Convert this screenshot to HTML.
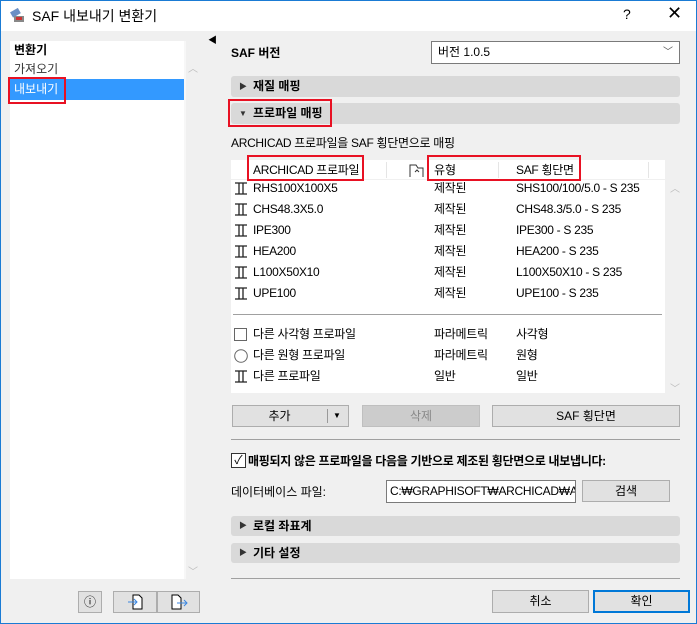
<!DOCTYPE html><html><head><meta charset="utf-8"><style>
*{box-sizing:border-box;margin:0;padding:0;white-space:nowrap}
body{width:697px;height:624px;overflow:hidden;background:#f0f0f0;font-family:"Liberation Sans","Noto Sans CJK KR",sans-serif;font-size:12px;color:#000;position:relative}
.a{position:absolute}
.win{left:0;top:0;width:697px;height:624px;border:1px solid #1a7bd4}
.title{left:1px;top:1px;width:695px;height:30px;background:#fff}
.bar{background:#d9d9d9;border-radius:3px;height:21px;font-weight:bold;padding-left:22px;line-height:21px;font-size:12px}
.bar .tri{position:absolute;left:8px;top:0;font-size:8px;color:#333}
.red{border:2px solid #e81123}
.btn{background:#e1e1e1;border:1px solid #adadad;text-align:center;line-height:20px;height:22px}
.row{height:21px;line-height:21px;width:434px;left:0}
.ic{position:absolute;left:3px;top:4px}
.t{letter-spacing:-0.3px}
</style></head><body>
<div class="a win"></div>
<div class="a title"></div>
<svg class="a" style="left:9px;top:8px" width="18" height="16"><rect x="2" y="2" width="9" height="6" fill="#6b8fc4" transform="rotate(-30 6 5)"/><rect x="5" y="8" width="10" height="6" fill="#888"/><rect x="7" y="9" width="6" height="3" fill="#c33"/></svg>
<div class="a" style="left:32px;top:6px;font-size:14px">SAF 내보내기 변환기</div>
<div class="a" style="left:623px;top:6px;font-size:14px">?</div>
<div class="a" style="left:667px;top:3px;font-size:18px">✕</div>
<div class="a" style="left:10px;top:41px;width:174px;height:538px;background:#fff"></div>
<div class="a" style="left:184px;top:41px;width:2px;height:538px;background:#f7f7f7"></div>
<div class="a" style="left:14px;top:41px;font-weight:bold;line-height:18px">변환기</div>
<div class="a" style="left:14px;top:60px;line-height:18px;color:#333">가져오기</div>
<div class="a" style="left:10px;top:79px;width:174px;height:21px;background:#3399ff;color:#fff;padding-left:4px;line-height:21px">내보내기</div>
<div class="a red" style="left:8px;top:77px;width:58px;height:27px"></div>
<div class="a" style="left:188px;top:60px;color:#bbb;font-size:10px">︿</div>
<div class="a" style="left:188px;top:563px;color:#bbb;font-size:10px">﹀</div>
<div class="a" style="left:208px;top:33px;font-size:9px">◀</div>
<div class="a btn" style="left:78px;top:591px;width:24px;height:22px">ⓘ</div>
<div class="a btn" style="left:113px;top:591px;width:44px;height:22px"><svg width="20" height="20"><path d="M8 3h6l3 3v11H8z" fill="#fff" stroke="#000"/><path d="M3 10h9M9 7l3 3-3 3" stroke="#3a86e0" fill="none"/></svg></div>
<div class="a btn" style="left:157px;top:591px;width:43px;height:22px"><svg width="22" height="20"><path d="M4 3h6l3 3v11H4z" fill="#fff" stroke="#000"/><path d="M9 11h10M16 8l3 3-3 3" stroke="#3a86e0" fill="none"/></svg></div>
<div class="a" style="left:231px;top:44px;font-weight:bold">SAF 버전</div>
<div class="a" style="left:431px;top:41px;width:249px;height:23px;background:#fff;border:1px solid #7a7a7a;padding-left:6px;line-height:21px">버전 1.0.5<span class="a" style="right:6px;top:0;color:#555;font-size:10px">﹀</span></div>
<div class="a bar" style="left:231px;top:76px;width:449px"><span class="tri">▶</span>재질 매핑</div>
<div class="a bar" style="left:231px;top:103px;width:449px"><span class="tri">▼</span>프로파일 매핑</div>
<div class="a red" style="left:228px;top:99px;width:104px;height:28px"></div>
<div class="a t" style="left:231px;top:134px">ARCHICAD 프로파일을 SAF 횡단면으로 매핑</div>
<div class="a" style="left:231px;top:160px;width:434px;height:233px;background:#fff"></div>
<div class="a" style="left:231px;top:160px;width:434px;height:20px;border-bottom:1px solid #f0f0f0"></div>
<div class="a t" style="left:253px;top:160px;line-height:20px">ARCHICAD 프로파일</div>
<div class="a" style="left:386px;top:162px;width:1px;height:16px;background:#e5e5e5"></div>
<div class="a" style="left:498px;top:162px;width:1px;height:16px;background:#e5e5e5"></div>
<div class="a" style="left:648px;top:162px;width:1px;height:16px;background:#e5e5e5"></div>
<svg class="a" style="left:409px;top:162px" width="16" height="16"><path d="M1 15V3h6l2 3h5v9" fill="none" stroke="#333"/><path d="M6 10l2-2 2 2" fill="none" stroke="#333"/></svg>
<div class="a" style="left:434px;top:160px;line-height:20px">유형</div>
<div class="a t" style="left:516px;top:160px;line-height:20px">SAF 횡단면</div>
<div class="a red" style="left:247px;top:155px;width:117px;height:26px"></div>
<div class="a red" style="left:427px;top:155px;width:154px;height:26px"></div>
<div class="a" style="left:670px;top:180px;color:#bbb;font-size:10px">︿</div>
<div class="a" style="left:670px;top:380px;color:#bbb;font-size:10px">﹀</div>
<div class="a t" style="left:231px;top:178px;width:434px">
<div class="row a" style="top:0"><svg class="ic" width="14" height="13"><path d="M1 1h12M1 12h12M5 1v11M9 1v11" stroke="#222" fill="none" stroke-width="1.3"/></svg><span class="a" style="left:22px">RHS100X100X5</span><span class="a" style="left:203px">제작된</span><span class="a" style="left:285px">SHS100/100/5.0 - S 235</span></div>
<div class="row a" style="top:21px"><svg class="ic" width="14" height="13"><path d="M1 1h12M1 12h12M5 1v11M9 1v11" stroke="#222" fill="none" stroke-width="1.3"/></svg><span class="a" style="left:22px">CHS48.3X5.0</span><span class="a" style="left:203px">제작된</span><span class="a" style="left:285px">CHS48.3/5.0 - S 235</span></div>
<div class="row a" style="top:42px"><svg class="ic" width="14" height="13"><path d="M1 1h12M1 12h12M5 1v11M9 1v11" stroke="#222" fill="none" stroke-width="1.3"/></svg><span class="a" style="left:22px">IPE300</span><span class="a" style="left:203px">제작된</span><span class="a" style="left:285px">IPE300 - S 235</span></div>
<div class="row a" style="top:63px"><svg class="ic" width="14" height="13"><path d="M1 1h12M1 12h12M5 1v11M9 1v11" stroke="#222" fill="none" stroke-width="1.3"/></svg><span class="a" style="left:22px">HEA200</span><span class="a" style="left:203px">제작된</span><span class="a" style="left:285px">HEA200 - S 235</span></div>
<div class="row a" style="top:84px"><svg class="ic" width="14" height="13"><path d="M1 1h12M1 12h12M5 1v11M9 1v11" stroke="#222" fill="none" stroke-width="1.3"/></svg><span class="a" style="left:22px">L100X50X10</span><span class="a" style="left:203px">제작된</span><span class="a" style="left:285px">L100X50X10 - S 235</span></div>
<div class="row a" style="top:105px"><svg class="ic" width="14" height="13"><path d="M1 1h12M1 12h12M5 1v11M9 1v11" stroke="#222" fill="none" stroke-width="1.3"/></svg><span class="a" style="left:22px">UPE100</span><span class="a" style="left:203px">제작된</span><span class="a" style="left:285px">UPE100 - S 235</span></div>
<div class="a" style="left:2px;top:136px;width:429px;height:1px;background:#a0a0a0"></div>
<div class="row a" style="top:146px"><svg class="ic" width="14" height="14"><rect x=".5" y=".5" width="12" height="12" fill="none" stroke="#666"/></svg><span class="a" style="left:22px">다른 사각형 프로파일</span><span class="a" style="left:203px">파라메트릭</span><span class="a" style="left:285px">사각형</span></div>
<div class="row a" style="top:167px"><svg class="ic" width="14" height="14"><circle cx="7" cy="7" r="6.3" fill="none" stroke="#666"/></svg><span class="a" style="left:22px">다른 원형 프로파일</span><span class="a" style="left:203px">파라메트릭</span><span class="a" style="left:285px">원형</span></div>
<div class="row a" style="top:188px"><svg class="ic" width="14" height="13"><path d="M1 1h12M1 12h12M5 1v11M9 1v11" stroke="#222" fill="none" stroke-width="1.3"/></svg><span class="a" style="left:22px">다른 프로파일</span><span class="a" style="left:203px">일반</span><span class="a" style="left:285px">일반</span></div>
</div>
<div class="a btn" style="left:232px;top:405px;width:117px;height:22px;padding-right:22px">추가<span class="a" style="left:94px;top:3px;width:1px;height:14px;background:#999"></span><span class="a" style="left:100px;top:0;font-size:8px">▼</span></div>
<div class="a btn" style="left:362px;top:405px;width:118px;height:22px;background:#ccc;border-color:#bfbfbf;color:#888">삭제</div>
<div class="a btn" style="left:492px;top:405px;width:188px;height:22px">SAF 횡단면</div>
<div class="a" style="left:231px;top:439px;width:449px;height:1px;background:#a0a0a0"></div>
<div class="a" style="left:231px;top:453px;width:15px;height:15px;border:1px solid #333;background:#fff;font-size:12px;line-height:13px;text-align:center">✓</div>
<div class="a t" style="left:248px;top:452px;font-weight:bold">매핑되지 않은 프로파일을 다음을 기반으로 제조된 횡단면으로 내보냅니다:</div>
<div class="a" style="left:231px;top:483px">데이터베이스 파일:</div>
<div class="a t" style="left:386px;top:480px;width:190px;height:23px;background:#fff;border:1px solid #7a7a7a;padding-left:3px;line-height:21px;overflow:hidden">C:₩GRAPHISOFT₩ARCHICAD₩ARCH</div>
<div class="a btn" style="left:582px;top:480px;width:88px;height:22px">검색</div>
<div class="a bar" style="left:231px;top:516px;width:449px;height:20px;line-height:20px"><span class="tri">▶</span>로컬 좌표계</div>
<div class="a bar" style="left:231px;top:543px;width:449px;height:20px;line-height:20px"><span class="tri">▶</span>기타 설정</div>
<div class="a" style="left:231px;top:578px;width:449px;height:1px;background:#a0a0a0"></div>
<div class="a btn" style="left:492px;top:590px;width:97px;height:23px">취소</div>
<div class="a btn" style="left:593px;top:590px;width:97px;height:23px;border:2px solid #0078d7;line-height:19px">확인</div>
</body></html>
